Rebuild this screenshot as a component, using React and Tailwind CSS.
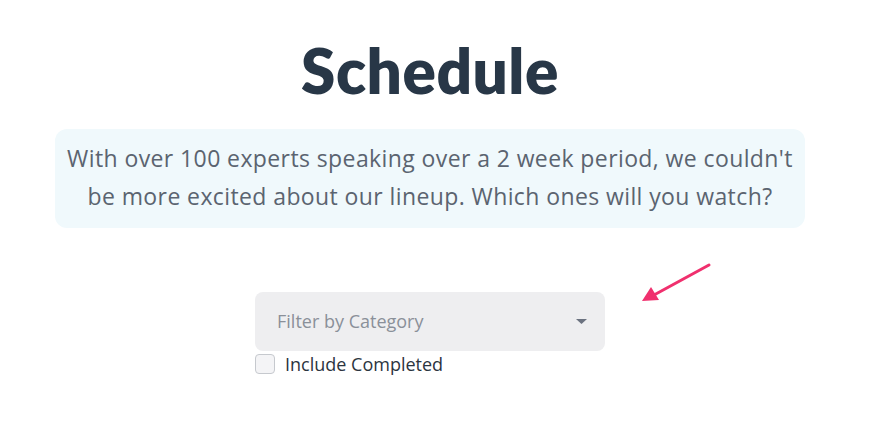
import React, { useState } from 'react';

const App = () => {
  const [includeCompleted, setIncludeCompleted] = useState(false);

  return (
    <div className="w-[860px] min-h-[421px] bg-white font-['Open_Sans','Noto_Sans',sans-serif] relative">
      <div className="flex flex-col items-center pt-[36px]">
        <h1 className="font-['Lato',sans-serif] text-[62px] leading-[68px] font-extrabold text-[#283747] tracking-[0.5px]">Schedule</h1>

        <div className="mt-[25px] w-[750px] rounded-[12px] bg-[#f0f9fc] px-2 pt-[10px] pb-[13px]">
          <p className="text-center text-[23px] leading-[38px] tracking-[0.4px] text-[#5b6470]">
            With over 100 experts speaking over a 2 week period, we couldn't
            <br />
            be more excited about our lineup. Which ones will you watch?
          </p>
        </div>

        <div className="mt-[64px] w-[350px]">
          <button className="w-full h-[59px] rounded-[8px] bg-[#eeeef0] flex items-center justify-between pl-[22px] pr-[18px]">
            <span className="text-[18px] text-[#8a9099]">Filter by Category</span>
            <svg width="11" height="6" viewBox="0 0 11 6">
              <path d="M0 0 L11 0 L5.5 5 Z" fill="#6b7280" />
            </svg>
          </button>
          <label className="mt-[3px] flex items-center gap-[10px] cursor-pointer">
            <input
              type="checkbox"
              checked={includeCompleted}
              onChange={(e) => setIncludeCompleted(e.target.checked)}
              className="appearance-none w-[20px] h-[20px] rounded-[4px] border border-[#c6c9ce] bg-[#f4f4f6]"
            />
            <span className="text-[18px] leading-[20px] text-[#2b3440]">Include Completed</span>
          </label>
        </div>
      </div>

      {/* annotation arrow */}
      <svg className="absolute left-[638px] top-[260px]" width="76" height="46" viewBox="0 0 76 46">
        <line x1="71" y1="5" x2="16" y2="35" stroke="#f0306e" strokeWidth="3" strokeLinecap="round" />
        <path d="M4 41 L13 27 L21 40 Z" fill="#f0306e" />
      </svg>
    </div>
  );
};

export default App;
